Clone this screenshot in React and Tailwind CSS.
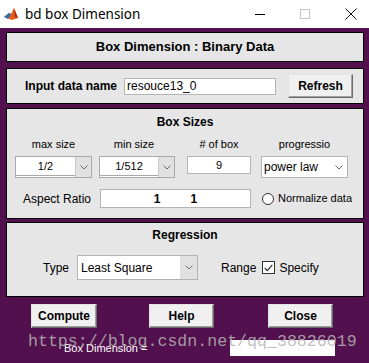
import React from 'react';

const font = { fontFamily: '"Liberation Sans", Arial, sans-serif' };

function Chevron() {
  return (
    <svg width="8" height="5" viewBox="0 0 8 5" className="block">
      <path d="M0.5 0.5 L4 4 L7.5 0.5" fill="none" stroke="#6a6a6a" strokeWidth="1" />
    </svg>
  );
}

// MATLAB style popup: white field with a grey arrow strip
function Popup({ value, width, arrowWhite }) {
  return (
    <div className={`flex h-[22px] border border-[#a9a9a9] bg-white ${width}`}>
      <div className="flex-1 border-b border-[#a9a9a9] h-[19px] flex items-center justify-center text-[11px] text-black">
        {value}
      </div>
      <div className={`w-[16px] flex items-center justify-center border-l border-[#c8c8c8] ${arrowWhite ? 'bg-white' : 'bg-[#e1e1e1]'}`}>
        <Chevron />
      </div>
    </div>
  );
}

function Button({ children, width }) {
  return (
    <div className={`h-[24px] ${width} flex items-center justify-center bg-[#f0f0f0] border border-t-[#e3e3e3] border-l-[#e3e3e3] border-r-[#6b6b6b] border-b-[#6b6b6b] shadow-[inset_-1px_-1px_0_#a0a0a0] text-[12px] font-bold text-black`}>
      {children}
    </div>
  );
}

export default function App() {
  return (
    <div className="w-[369px] h-[363px] flex flex-col bg-[#53104e] overflow-hidden relative" style={font}>
      {/* Window title bar */}
      <div className="h-[28px] bg-white flex items-center shrink-0">
        <svg width="16" height="14" viewBox="0 0 16 14" className="ml-[3px]">
          <path d="M1 10 L6 6 L8 7 L11 1 L15 11 L9 13 Z" fill="#e25c1b" />
          <path d="M1 10 L6 6 L8 7 L5 12 Z" fill="#2f6fb5" />
          <path d="M11 1 L15 11 L12 10 Z" fill="#b3261e" />
        </svg>
        <span className="ml-[6px] text-[13.5px] text-black" style={{ fontFamily: '"Noto Sans", "Open Sans", sans-serif' }}>bd box Dimension</span>
        <div className="ml-auto flex items-center">
          <div className="w-[10px] h-px bg-black mr-[35px]" />
          <div className="w-[10px] h-[10px] border border-[#c4c4c4] mr-[35px]" />
          <svg width="12" height="12" viewBox="0 0 12 12" className="mr-[12px]">
            <path d="M0.5 0.5 L11.5 11.5 M11.5 0.5 L0.5 11.5" stroke="#111" strokeWidth="1" />
          </svg>
        </div>
      </div>

      <div className="flex flex-col pl-[6px] pr-[5px]">
        {/* Title panel */}
        <div className="mt-[4px] h-[30px] border border-black bg-[#e6e6e6] flex items-center justify-center text-[13px] font-bold text-black">
          Box Dimension : Binary Data
        </div>

        {/* Input data name */}
        <div className="mt-[6px] h-[36px] border border-black bg-[#e6e6e6] flex items-center pl-[18px]">
          <span className="text-[12px] font-bold text-black">Input data name</span>
          <div className="ml-[7px] w-[152px] h-[17px] bg-white border border-[#b4b4b4] flex items-center pl-[2px] text-[12px] text-black">
            resouce13_0
          </div>
          <div className="ml-[12px]">
            <Button width="w-[65px]">Refresh</Button>
          </div>
        </div>

        {/* Box sizes */}
        <div className="mt-[4px] h-[111px] border border-black bg-[#e6e6e6] flex flex-col">
          <div className="mt-[6px] text-center text-[12px] leading-[14px] font-bold text-black">Box Sizes</div>
          <div className="mt-[9px] flex pl-[8px]">
            <div className="w-[77px] flex flex-col items-center">
              <span className="text-[11px] leading-[13px] text-black">max size</span>
              <div className="mt-[5px] w-full"><Popup value="1/2" width="w-full" /></div>
            </div>
            <div className="ml-[7px] w-[76px] flex flex-col items-center">
              <span className="text-[11px] leading-[13px] text-black -ml-[6px]">min size</span>
              <div className="mt-[5px] w-full"><Popup value="1/512" width="w-full" /></div>
            </div>
            <div className="ml-[12px] w-[64px] flex flex-col items-center">
              <span className="text-[11px] leading-[13px] text-black">#&nbsp;of box</span>
              <div className="mt-[5px] w-full h-[18px] bg-white border border-[#b4b4b4] flex items-center justify-center text-[11px] text-black">9</div>
            </div>
            <div className="ml-[10px] w-[87px] flex flex-col items-center">
              <span className="text-[11px] leading-[13px] text-black">progressio</span>
              <div className="mt-[5px] w-full h-[22px] bg-white border border-[#b4b4b4] flex items-center">
                <span className="flex-1 pl-[2px] text-[12px] text-black">power law</span>
                <div className="w-[16px] flex justify-center"><Chevron /></div>
              </div>
            </div>
          </div>
          <div className="mt-[11px] flex items-center pl-[16px]">
            <span className="text-[12px] text-black">Aspect Ratio</span>
            <div className="ml-[9px] w-[151px] h-[19px] bg-white border border-[#b4b4b4] flex items-center justify-center gap-[30px] text-[12px] font-bold text-black">
              <span>1</span>
              <span>1</span>
            </div>
            <div className="ml-[11px] w-[12px] h-[12px] rounded-full border border-[#333] bg-white" />
            <span className="ml-[4px] text-[11px] text-black">Normalize data</span>
          </div>
        </div>

        {/* Regression */}
        <div className="mt-[3px] h-[75px] border border-black bg-[#e6e6e6] flex flex-col">
          <div className="mt-[5px] text-center text-[12px] leading-[14px] font-bold text-black">Regression</div>
          <div className="mt-[13px] flex items-center pl-[36px]">
            <span className="text-[12px] text-black">Type</span>
            <div className="ml-[8px] w-[121px] h-[25px] bg-white border border-[#b4b4b4] flex">
              <span className="flex-1 flex items-center pl-[3px] text-[12px] text-black">Least Square</span>
              <div className="w-[17px] bg-[#e1e1e1] flex items-center justify-center"><Chevron /></div>
            </div>
            <span className="ml-[23px] text-[12px] text-black">Range</span>
            <div className="ml-[6px] w-[13px] h-[13px] border border-[#333] bg-white flex items-center justify-center">
              <svg width="9" height="8" viewBox="0 0 9 8">
                <path d="M0.8 4 L3.3 6.6 L8.3 0.8" fill="none" stroke="#222" strokeWidth="1.1" />
              </svg>
            </div>
            <span className="ml-[4px] text-[12px] text-black">Specify</span>
          </div>
        </div>

        {/* Buttons */}
        <div className="mt-[7px] flex pl-[25px]">
          <Button width="w-[66px]">Compute</Button>
          <div className="ml-[52px]"><Button width="w-[65px]">Help</Button></div>
          <div className="ml-[54px]"><Button width="w-[65px]">Close</Button></div>
        </div>

        {/* Result row */}
        <div className="mt-[12px] flex items-center pl-[58px]">
          <span className="w-[166px] text-[11px] text-white">Box Dimension =</span>
          <div className="w-[105px] h-[16px] bg-white" />
        </div>
      </div>

      {/* watermark */}
      <div
        className="absolute left-[28px] top-[332px] text-[16.6px] leading-[20px] text-[rgba(181,181,181,0.85)] pointer-events-none whitespace-nowrap"
        style={{ fontFamily: '"Liberation Mono", monospace' }}
      >
        https://blog.csdn.net/qq_38826019
      </div>
    </div>
  );
}
